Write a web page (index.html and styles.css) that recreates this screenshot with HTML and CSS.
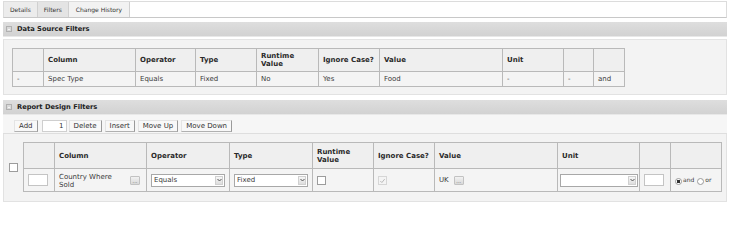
FILE: index.html
```html
<!DOCTYPE html>
<html>
<head>
<meta charset="utf-8">
<link rel="stylesheet" href="styles.css">
</head>
<body>
<div class="page">
  <div class="tabs">
    <div class="tab">Details</div>
    <div class="tab sel">Filters</div>
    <div class="tab">Change History</div>
  </div>

  <div class="hbar"><span class="tog"></span><span class="htitle">Data Source Filters</span></div>
  <div class="panel p1">
    <table class="grid g1">
      <colgroup>
        <col style="width:31px"><col style="width:92px"><col style="width:60px"><col style="width:61px"><col style="width:62px"><col style="width:61px"><col style="width:123px"><col style="width:61px"><col style="width:30px"><col style="width:31px">
      </colgroup>
      <tr class="hd">
        <th></th><th>Column</th><th>Operator</th><th>Type</th><th>Runtime<br>Value</th><th>Ignore Case?</th><th>Value</th><th>Unit</th><th></th><th></th>
      </tr>
      <tr class="rw">
        <td>-</td><td>Spec Type</td><td>Equals</td><td>Fixed</td><td>No</td><td>Yes</td><td>Food</td><td>-</td><td>-</td><td>and</td>
      </tr>
    </table>
  </div>

  <div class="hbar h2"><span class="tog"></span><span class="htitle">Report Design Filters</span></div>
  <div class="toolbar">
    <span class="btn">Add</span>
    <span class="num">1</span>
    <span class="btn">Delete</span>
    <span class="btn">Insert</span>
    <span class="btn">Move Up</span>
    <span class="btn">Move Down</span>
  </div>
  <div class="panel p2">
    <div class="outerchk"><span class="chk"></span></div>
    <table class="grid g2">
      <colgroup>
        <col style="width:31px"><col style="width:92px"><col style="width:83px"><col style="width:83px"><col style="width:61px"><col style="width:61px"><col style="width:123px"><col style="width:82px"><col style="width:31px"><col style="width:51px">
      </colgroup>
      <tr class="hd">
        <th></th><th>Column</th><th>Operator</th><th>Type</th><th>Runtime<br>Value</th><th>Ignore Case?</th><th>Value</th><th>Unit</th><th></th><th></th>
      </tr>
      <tr class="rw">
        <td><span class="txt t1"></span></td>
        <td><div class="colcell"><span class="cname">Country Where<br>Sold</span><span class="dots">...</span></div></td>
        <td><div class="sel-box"><span class="sv">Equals</span><span class="arr"><svg width="5" height="4" viewBox="0 0 5 4"><path d="M0.5 1 L2.5 3 L4.5 1" fill="none" stroke="#555" stroke-width="1"/></svg></span></div></td>
        <td><div class="sel-box"><span class="sv">Fixed</span><span class="arr"><svg width="5" height="4" viewBox="0 0 5 4"><path d="M0.5 1 L2.5 3 L4.5 1" fill="none" stroke="#555" stroke-width="1"/></svg></span></div></td>
        <td><span class="chk"></span></td>
        <td><span class="chk dis"><svg width="8" height="8" viewBox="0 0 8 8"><path d="M1.5 4 L3.3 5.8 L6.5 1.8" fill="none" stroke="#b8b8b8" stroke-width="1.1"/></svg></span></td>
        <td><div class="valcell"><span>UK</span><span class="dots">...</span></div></td>
        <td><div class="sel-box unit"><span class="sv"></span><span class="arr"><svg width="5" height="4" viewBox="0 0 5 4"><path d="M0.5 1 L2.5 3 L4.5 1" fill="none" stroke="#555" stroke-width="1"/></svg></span></div></td>
        <td><span class="txt t2"></span></td>
        <td><div class="radios"><span class="rad on"></span><span class="rl">and</span><span class="rad"></span><span class="rl">or</span></div></td>
      </tr>
    </table>
  </div>
</div>
</body>
</html>
```
FILE: styles.css
```css
html, body {
  margin: 0;
  padding: 0;
  background: #ffffff;
}
body {
  font-family: "DejaVu Sans", Verdana, sans-serif;
  font-size: 7px;
  color: #333333;
}
.page {
  padding: 1px 2px 0 3px;
  width: 724px;
}
.tabs {
  display: flex;
  height: 15px;
  border: 1px solid #dcdcdc;
  border-bottom-color: #c8c8c8;
  background: #ffffff;
}
.tab {
  display: flex;
  align-items: center;
  padding: 0 6px;
  font-size: 6px;
  color: #333;
  background: #ececec;
  border-right: 1px solid #d0d0d0;
}
.tab.sel {
  background: #e4e4e4;
}
.tab:last-child {
  background: #f2f2f2;
  padding: 0 7px;
}
.hbar {
  margin-top: 4px;
  height: 14px;
  display: flex;
  align-items: center;
  background: linear-gradient(#dedede, #d2d2d2);
  border-bottom: 1px solid #e8e8e8;
}
.hbar.h2 {
  margin-top: 5px;
}
.tog {
  width: 4px;
  height: 4px;
  margin: 0 5px 0 3px;
  border: 1px solid #b0b0b0;
  background: linear-gradient(#f4f4f4, #f4f4f4) center / 2px 1px no-repeat, #d8d8d8;
}
.htitle {
  font-weight: bold;
  font-size: 6.7px;
  color: #222;
}
.panel {
  background: #f3f3f3;
  border: 1px solid #e2e2e2;
  border-top: none;
}
.p1 {
  margin-top: 2px;
  border-top: 1px solid #e4e4e4;
  padding: 8px 0 7px 8px;
}
.grid {
  border-collapse: collapse;
  table-layout: fixed;
}
.grid th, .grid td {
  border: 1px solid #b9b9b9;
  padding: 0 0 0 4px;
  text-align: left;
  vertical-align: middle;
  overflow: hidden;
  white-space: nowrap;
}
.grid th {
  font-weight: bold;
  color: #2a2a2a;
  background: #efefef;
  line-height: 8px;
}
.grid td {
  background: #f4f4f4;
  color: #3a3a3a;
}
.g1 { width: 612px; }
.g1 .hd { height: 23px; }
.g1 .rw { height: 15px; }
.toolbar {
  display: flex;
  align-items: flex-start;
  padding: 5px 0 0 11px;
  box-sizing: border-box;
  height: 19px;
  background: #f6f6f6;
  border-bottom: 1px solid #dedede;
}
.btn {
  height: 10px;
  display: flex;
  align-items: center;
  padding: 0 4px;
  margin-right: 3px;
  background: #f8f8f8;
  border: 1px solid #e4e4e4;
  border-right-color: #9a9a9a;
  border-bottom-color: #b0b0b0;
  color: #333;
}
.num {
  width: 21px;
  height: 10px;
  margin: 0 2px 0 1px;
  display: flex;
  align-items: center;
  justify-content: flex-end;
  padding-right: 2px;
  background: #fff;
  border: 1px solid #cfcfcf;
  box-sizing: content-box;
}
.p2 {
  display: flex;
  align-items: center;
  padding: 8px 0 9px 0;
}
.outerchk {
  width: 19px;
  display: flex;
  justify-content: center;
}
.g2 { width: 698px; }
.g2 .hd { height: 26px; }
.g2 .rw { height: 23px; }
.g2 td { line-height: 8px; }
.chk {
  display: inline-flex;
  width: 7px;
  height: 7px;
  border: 1px solid #9c9c9c;
  background: #ffffff;
  vertical-align: middle;
}
.chk.dis {
  border-color: #d6d6d6;
  background: #f4f4f4;
}
.txt {
  display: block;
  height: 10px;
  background: #fff;
  border: 1px solid #c4c4c4;
}
.t1 { width: 18px; }
.t2 { width: 18px; }
.colcell {
  display: flex;
  align-items: center;
  justify-content: space-between;
  padding-right: 6px;
  padding-top: 1px;
}
.dots {
  display: inline-flex;
  width: 8px;
  height: 7px;
  align-items: flex-end;
  justify-content: center;
  font-size: 5px;
  line-height: 5px;
  color: #555;
  background: linear-gradient(#f2f2f2, #d8d8d8);
  border: 1px solid #c2c2c2;
  border-radius: 1px;
  overflow: hidden;
}
.sel-box {
  display: flex;
  width: 72px;
  height: 11px;
  background: #fff;
  border: 1px solid #a8a8a8;
  align-items: center;
}
.sel-box.unit {
  width: 76px;
  margin-left: -2px;
}
.sv {
  flex: 1;
  padding-left: 2px;
}
.arr {
  width: 8px;
  height: 9px;
  margin-right: 1px;
  display: flex;
  align-items: center;
  justify-content: center;
  background: linear-gradient(#f6f6f6, #dedede);
  border: 1px solid #d0d0d0;
  box-sizing: border-box;
}
.valcell {
  display: flex;
  align-items: center;
  gap: 5px;
}
.radios {
  display: flex;
  align-items: center;
}
.rad {
  width: 7px;
  height: 7px;
  border-radius: 50%;
  border: 1px solid #9a9a9a;
  background: #fff;
  box-sizing: border-box;
  margin-top: 2px;
}
.rad.on {
  background: radial-gradient(circle, #333 0 1.5px, #fff 2px);
}
.rl {
  font-size: 6px;
  margin: 0 3px 0 1px;
  align-self: flex-start;
}
```
